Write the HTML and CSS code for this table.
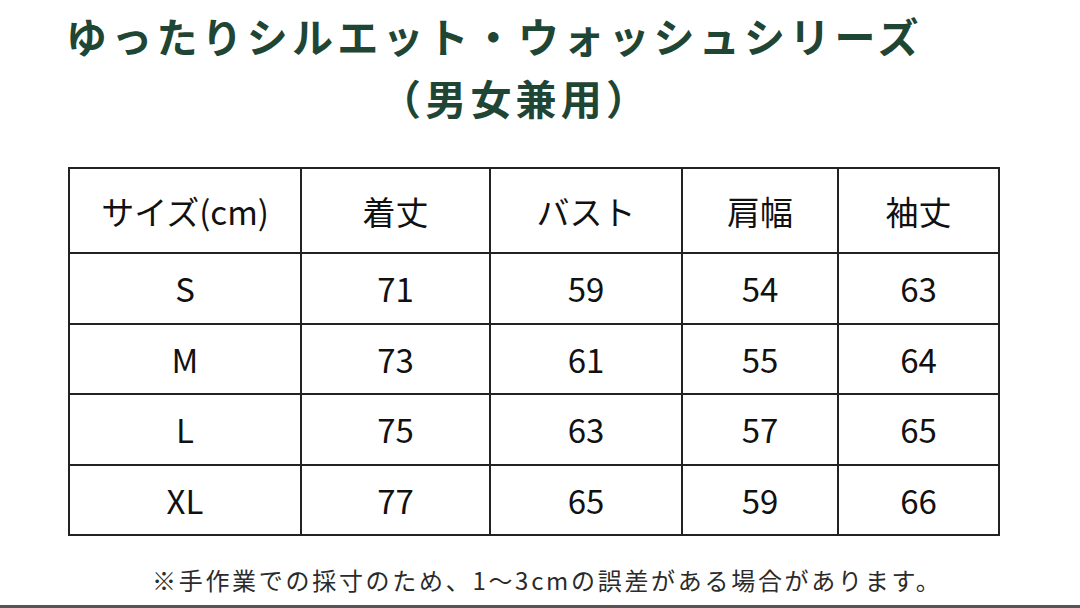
FILE: index.html
```html
<!DOCTYPE html>
<html lang="ja">
<head>
<meta charset="utf-8">
<link rel="stylesheet" href="styles.css">
</head>
<body>
<div class="page">
  <header class="title">
    <div class="title-line1">ゆったりシルエット・ウォッシュシリーズ</div>
    <div class="title-line2">（男女兼用）</div>
  </header>
  <table class="size-table">
    <colgroup>
      <col class="c1"><col class="c2"><col class="c3"><col class="c4"><col class="c5">
    </colgroup>
    <thead>
      <tr><th>サイズ(cm)</th><th>着丈</th><th>バスト</th><th>肩幅</th><th>袖丈</th></tr>
    </thead>
    <tbody>
      <tr><td>S</td><td>71</td><td>59</td><td>54</td><td>63</td></tr>
      <tr><td>M</td><td>73</td><td>61</td><td>55</td><td>64</td></tr>
      <tr><td>L</td><td>75</td><td>63</td><td>57</td><td>65</td></tr>
      <tr><td>XL</td><td>77</td><td>65</td><td>59</td><td>66</td></tr>
    </tbody>
  </table>
  <p class="note">※手作業での採寸のため、1〜3cmの誤差がある場合があります。</p>
  <div class="bottom-bar"></div>
</div>
</body>
</html>
```

FILE: styles.css
```css
html, body {
  margin: 0;
  padding: 0;
  background: #ffffff;
}
body {
  font-family: "Noto Sans CJK JP", "Noto Sans", sans-serif;
  color: #1c1c1c;
}
.page {
  width: 1080px;
  height: 608px;
  display: flex;
  flex-direction: column;
  overflow: hidden;
}
.title {
  padding: 10px 0 0 66px;
  color: #1f4535;
  font-weight: 700;
  font-size: 41px;
  letter-spacing: 4.2px;
}
.title-line1 {
  line-height: 50px;
}
.title-line2 {
  line-height: 50px;
  padding-left: 314px;
  margin-top: 12px;
}
.size-table {
  margin: 45px 0 0 68px;
  width: 930px;
  border-collapse: collapse;
  border: 2px solid #222;
  table-layout: fixed;
}
.c1 { width: 232px; }
.c2 { width: 189px; }
.c3 { width: 192px; }
.c4 { width: 156px; }
.c5 { width: 161px; }
.size-table th,
.size-table td {
  border: 2px solid #222;
  text-align: center;
  font-weight: 400;
  font-size: 33px;
  padding: 0;
  color: #111;
}
.size-table th {
  height: 83px;
}
.size-table td {
  height: 68.5px;
}
.note {
  margin: 29px 0 0 0;
  padding-left: 152px;
  font-size: 24px;
  letter-spacing: 2.7px;
  color: #2b2b2b;
  line-height: 30px;
}
.bottom-bar {
  margin-top: auto;
  height: 3px;
  background: #555;
}
```
